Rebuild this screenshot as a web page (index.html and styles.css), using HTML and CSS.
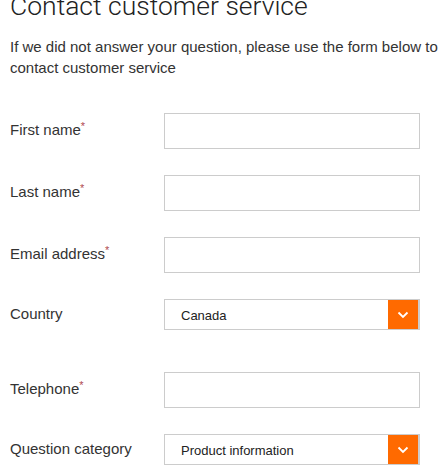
FILE: index.html
```html
<!DOCTYPE html>
<html lang="en">
<head>
  <meta charset="UTF-8" />
  <title>Contact customer service</title>
  <link rel="stylesheet" href="styles.css">
</head>
<body>

  <div class="page">
    <h1>Contact customer service</h1>
    <p class="intro">If we did not answer your question, please use the form below to contact customer service</p>

    <form class="contact-form">
      <div class="row">
        <label>First name<span class="req">*</span></label>
        <input type="text" />
      </div>

      <div class="row">
        <label>Last name<span class="req">*</span></label>
        <input type="text" />
      </div>

      <div class="row">
        <label>Email address<span class="req">*</span></label>
        <input type="text" />
      </div>

      <div class="row row-select row-country">
        <label>Country</label>
        <div class="select">
          <span class="select-value">Canada</span>
          <span class="select-btn">
            <svg width="12" height="8" viewBox="0 0 12 8"><path d="M1.5 1.5 L6 6 L10.5 1.5" fill="none" stroke="#fff" stroke-width="1.8"/></svg>
          </span>
        </div>
      </div>

      <div class="row">
        <label>Telephone<span class="req">*</span></label>
        <input type="text" />
      </div>

      <div class="row row-select">
        <label>Question category</label>
        <div class="select">
          <span class="select-value">Product information</span>
          <span class="select-btn">
            <svg width="12" height="8" viewBox="0 0 12 8"><path d="M1.5 1.5 L6 6 L10.5 1.5" fill="none" stroke="#fff" stroke-width="1.8"/></svg>
          </span>
        </div>
      </div>
    </form>
  </div>

</body>
</html>
```

FILE: styles.css
```css
* {
  box-sizing: border-box;
}

body {
  margin: 0;
  font-family: 'Liberation Sans', Arial, sans-serif;
  background-color: #fff;
  color: #333;
  overflow: hidden;
}

.page {
  padding-left: 10px;
}

h1 {
  margin: -9px 0 0;
  font-family: Roboto, 'Liberation Sans', sans-serif;
  font-weight: 300;
  font-size: 26.5px;
  line-height: 30px;
  color: #222;
}

.intro {
  margin: 15px 0 0;
  font-size: 15px;
  line-height: 21px;
}

/* Form */
.contact-form {
  margin-top: 35px;
}

.row {
  display: flex;
  align-items: center;
  margin-bottom: 26px;
}

.row label {
  width: 154px;
  padding-bottom: 3px;
  font-size: 15px;
  color: #333;
}

.req {
  color: #b04a50;
  font-size: 11px;
  vertical-align: top;
  position: relative;
  top: -1px;
}

.row input {
  width: 256px;
  height: 36px;
  border: 1px solid #ccc;
  padding: 0 10px;
  font-size: 13px;
}

.select {
  display: flex;
  align-items: center;
  width: 256px;
  height: 31px;
  border: 1px solid #ccc;
  border-right-width: 2px;
  font-size: 13px;
  color: #222;
}

.select-value {
  flex: 1;
  padding-left: 16px;
  padding-top: 1px;
}

.select-btn {
  width: 30px;
  height: 100%;
  background-color: #ff6a00;
  display: flex;
  align-items: center;
  justify-content: center;
}

.row-country {
  margin-bottom: 42px;
}
```
